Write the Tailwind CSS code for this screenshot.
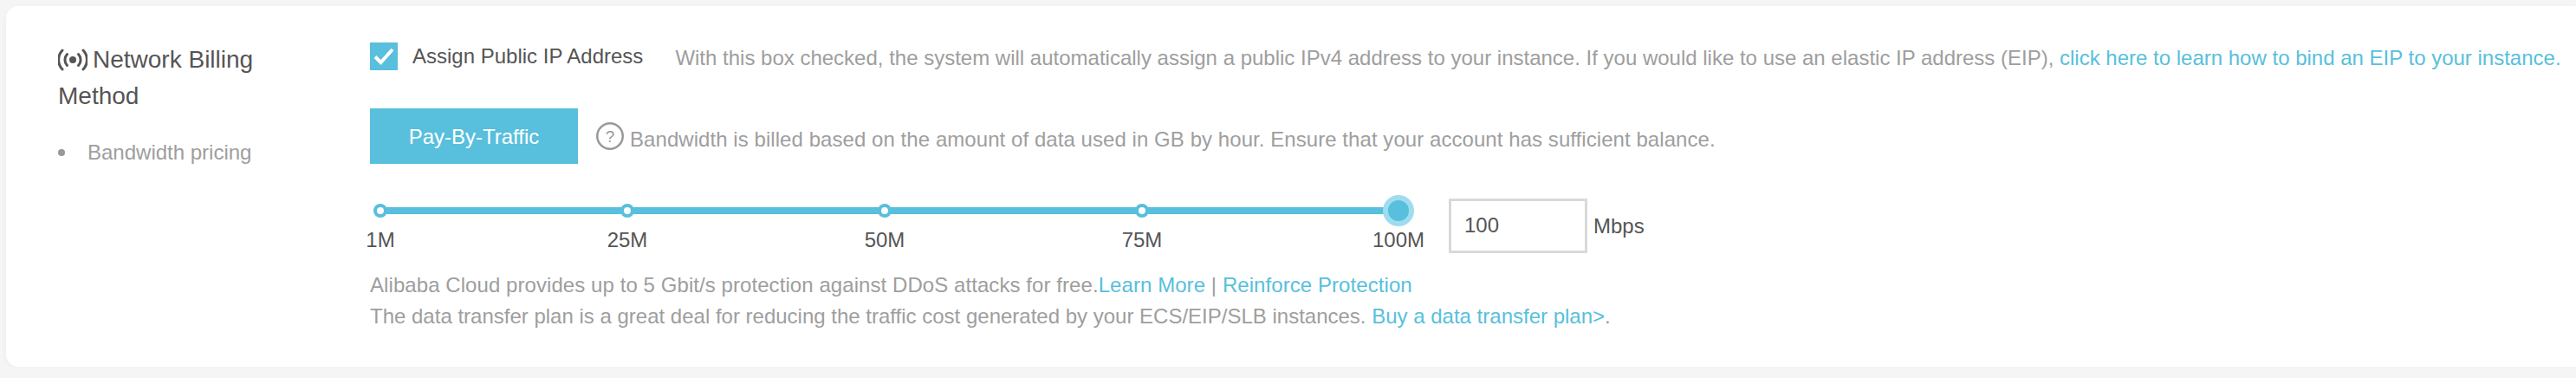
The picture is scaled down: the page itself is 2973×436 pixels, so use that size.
<!doctype html>
<html lang="en">
  <head>
    <meta charset="UTF-8" />
    <title>Network Billing Method</title>
    <script src="https://cdn.jsdelivr.net/npm/@tailwindcss/browser@4"></script>
  </head>
  <body class="bg-[#f5f5f5] font-['Liberation_Sans',sans-serif] overflow-hidden">
    <div class="ml-[7px] mt-[7px] h-[416px] flex bg-white rounded-l-[14px] shadow-[0_2px_6px_rgba(0,0,0,0.04)]">
      <!-- left column -->
      <div class="w-[420px] shrink-0 pl-[60px] pt-[41px]">
        <h3 class="w-[260px] text-[28px] leading-[42px] text-[#555]">
          <svg class="inline-block w-[34px] h-[26px] mr-[6px] align-[-4px]" viewBox="0 0 34 26" fill="none" stroke="#555" stroke-width="3" stroke-linecap="round">
            <circle cx="17" cy="13" r="4" fill="#555" stroke="none" />
            <path d="M10.5 6.5a9.5 9.5 0 0 0 0 13" />
            <path d="M23.5 6.5a9.5 9.5 0 0 1 0 13" />
            <path d="M5 2a16 16 0 0 0 0 22" />
            <path d="M29 2a16 16 0 0 1 0 22" />
          </svg>Network Billing Method
        </h3>
        <div class="flex items-center mt-[26px] text-[24px] leading-[36px] text-[#9e9e9e]">
          <span class="w-[8px] h-[8px] rounded-full bg-[#999]"></span>
          <span class="ml-[26px] whitespace-nowrap">Bandwidth pricing</span>
        </div>
      </div>

      <!-- right column -->
      <div class="flex-1 min-w-0 pt-[42px] text-[24px] whitespace-nowrap">
        <div class="flex items-center h-[32px]">
          <span class="w-[32px] h-[32px] bg-[#58bfdc]">
            <svg class="w-[32px] h-[32px]" viewBox="0 0 32 32" fill="none" stroke="#fff" stroke-width="4">
              <path d="M6 16.5l6.5 6.5L26 8" />
            </svg>
          </span>
          <span class="ml-[17px] text-[#555]">Assign Public IP Address</span>
          <span class="ml-[37px] mt-[4px] text-[#9e9e9e]">With this box checked, the system will automatically assign a public IPv4 address to your instance. If you would like to use an elastic IP address (EIP), <a class="text-[#58bfdc]">click here to learn how to bind an EIP to your instance.</a></span>
        </div>

        <div class="flex items-center mt-[44px]">
          <button class="w-[240px] h-[64px] pt-[2px] bg-[#58bfdc] text-white">Pay-By-Traffic</button>
          <svg class="ml-[21px] w-[32px] h-[32px]" viewBox="0 0 32 32" fill="none">
            <circle cx="16" cy="16" r="14.75" stroke="#999" stroke-width="2.5" />
            <text x="16" y="22.5" text-anchor="middle" font-size="19" fill="#999">?</text>
          </svg>
          <span class="ml-[7px] mt-[8px] tracking-[0.06px] text-[#9e9e9e]">Bandwidth is billed based on the amount of data used in GB by hour. Ensure that your account has sufficient balance.</span>
        </div>

        <div class="flex items-start mt-[36px]">
          <div class="relative flex text-[#555]">
            <div class="absolute left-[12px] top-[14px] w-[1176px] h-[8px] bg-[#58bfdc]"></div>
            <div class="relative w-[24px] flex flex-col items-center">
              <span class="mt-[10px] w-[16px] h-[16px] rounded-full bg-white border-[4px] border-[#58bfdc]"></span>
              <span class="mt-[8px]">1M</span>
            </div>
            <div class="relative ml-[261px] w-[24px] flex flex-col items-center">
              <span class="mt-[10px] w-[16px] h-[16px] rounded-full bg-white border-[4px] border-[#58bfdc]"></span>
              <span class="mt-[8px]">25M</span>
            </div>
            <div class="relative ml-[273px] w-[24px] flex flex-col items-center">
              <span class="mt-[10px] w-[16px] h-[16px] rounded-full bg-white border-[4px] border-[#58bfdc]"></span>
              <span class="mt-[8px]">50M</span>
            </div>
            <div class="relative ml-[273px] w-[24px] flex flex-col items-center">
              <span class="mt-[10px] w-[16px] h-[16px] rounded-full bg-white border-[4px] border-[#58bfdc]"></span>
              <span class="mt-[8px]">75M</span>
            </div>
            <div class="relative ml-[266px] w-[36px] flex flex-col items-center">
              <span class="w-[36px] h-[36px] rounded-full bg-[#58bfdc] border-[6px] border-[#9edcef]"></span>
              <span class="-mt-[2px]">100M</span>
            </div>
          </div>
          <input class="ml-[40px] mt-[4px] w-[160px] h-[63px] px-[15px] pb-[2px] border-[3px] border-[#d9d9d9] text-[#555] outline-none" value="100" />
          <span class="ml-[7px] mt-[18px] text-[#555]">Mbps</span>
        </div>

        <div class="mt-[16px] leading-[36px] text-[#9e9e9e]">
          <p class="tracking-[0.07px]">Alibaba Cloud provides up to 5 Gbit/s protection against DDoS attacks for free.<a class="text-[#58bfdc]">Learn More</a> | <a class="text-[#58bfdc]">Reinforce Protection</a></p>
          <p>The data transfer plan is a great deal for reducing the traffic cost generated by your ECS/EIP/SLB instances. <a class="text-[#58bfdc]">Buy a data transfer plan&gt;</a>.</p>
        </div>
      </div>
    </div>
  </body>
</html>
